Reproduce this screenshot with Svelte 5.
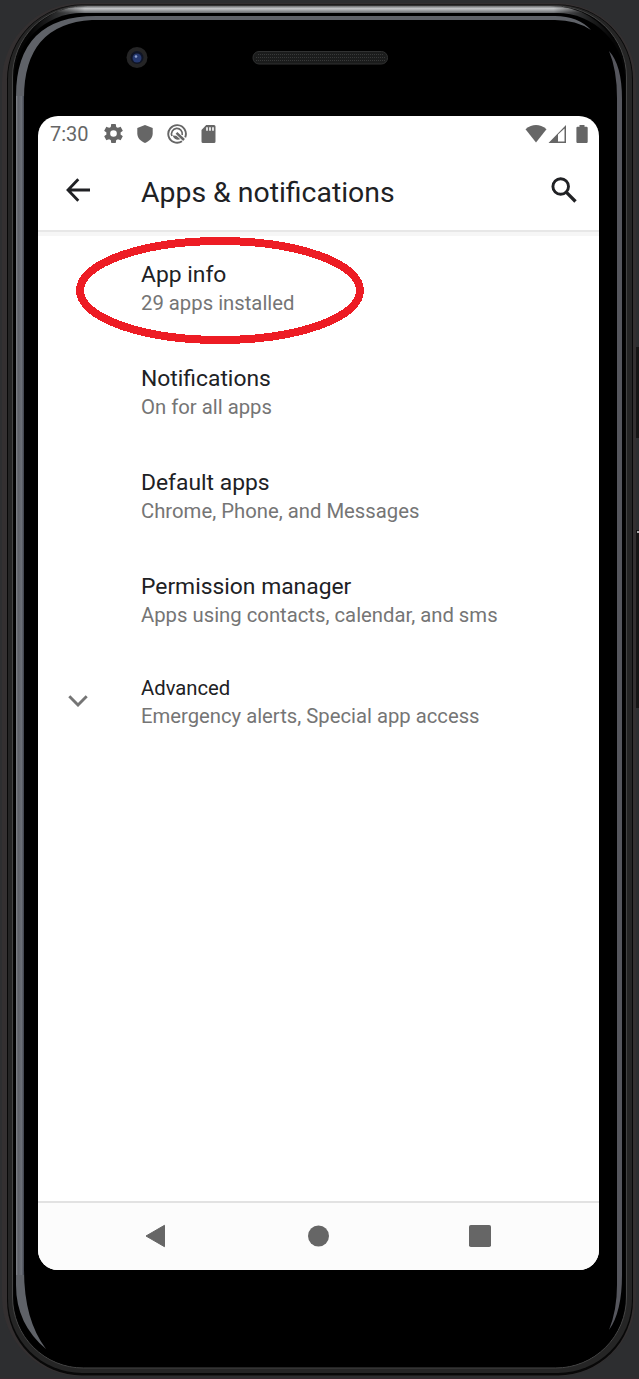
<script>
  const items = [
    { title: 'App info', summary: '29 apps installed' },
    { title: 'Notifications', summary: 'On for all apps' },
    { title: 'Default apps', summary: 'Chrome, Phone, and Messages' },
    { title: 'Permission manager', summary: 'Apps using contacts, calendar, and sms' },
    { title: 'Advanced', summary: 'Emergency alerts, Special app access', advanced: true }
  ];
</script>

<div class="stage">
  <svg class="frame" width="639" height="1379" viewBox="0 0 639 1379" aria-hidden="true">
    <defs>
      <linearGradient id="silver" x1="0" y1="5" x2="0" y2="13" gradientUnits="userSpaceOnUse">
        <stop offset="0" stop-color="#4b4c4e" />
        <stop offset=".45" stop-color="#c4c6c8" />
        <stop offset="1" stop-color="#65676a" />
      </linearGradient>
      <linearGradient id="fade" x1="30" y1="0" x2="639" y2="0" gradientUnits="userSpaceOnUse">
        <stop offset="0" stop-color="#aaa" stop-opacity="0" />
        <stop offset=".09" stop-color="#fff" />
        <stop offset=".86" stop-color="#fff" />
        <stop offset=".96" stop-color="#777" stop-opacity="0" />
      </linearGradient>
      <mask id="topfade"><rect width="639" height="90" fill="url(#fade)" /></mask>
      <linearGradient id="glare" x1="16" y1="0" x2="24" y2="0" gradientUnits="userSpaceOnUse">
        <stop offset="0" stop-color="#85888e" />
        <stop offset=".25" stop-color="#5d6067" />
        <stop offset=".7" stop-color="#6c7078" />
        <stop offset="1" stop-color="#3e424c" />
      </linearGradient>
    </defs>
    <rect width="639" height="1379" fill="#2d2e30" />
    <rect y="1378" width="639" height="1" fill="#382a30" />
    <rect x="636" y="347" width="3" height="91" fill="#161515" />
    <rect x="636" y="530" width="3" height="178" fill="#161515" />
    <rect x="637" y="531" width="2" height="2" fill="#aaa" />
    <rect x="2" y="3" width="634" height="1373" rx="79" fill="#343031" />
    <rect x="7" y="4.500" width="626" height="1371" rx="75" fill="#080808" />
    <rect x="8" y="5" width="624" height="1368" rx="74" fill="#252525" />
    <rect x="12.500" y="6" width="614" height="1362" rx="71" fill="#050505" stroke="#454545" />
    <path d="M28 41Q49 9.500 88 9.500H550Q591 9.500 615 47" fill="none" stroke="url(#silver)" stroke-width="7" mask="url(#topfade)" />
    <rect x="14" y="13" width="611" height="1354" rx="68" fill="#000" />
    <path d="M16 96Q16 16 96 16H555Q578 16 591 30Q576 20 555 20H92Q24 24 24 98V1270Q24 1320 46 1349Q16 1324 16 1285Z" fill="#5f6268" />
    <path d="M16 96H24V1275H16Z" fill="url(#glare)" />
    <path d="M609 51Q622 65 622 99V1275Q622 1312 609 1330Q617 1310 617 1285V98Q617 70 609 51Z" fill="#55565d" />
    <circle cx="137" cy="57.500" r="10.500" fill="#252526" />
    <circle cx="137" cy="57.500" r="6.500" fill="#101525" />
    <circle cx="137" cy="58" r="4.500" fill="#25386f" />
    <circle cx="136" cy="56.500" r="1.300" fill="#8da0ce" />
    <rect x="253" y="51.500" width="134.500" height="12.500" rx="6" fill="#1b1c1c" stroke="#303131" />
    <path d="M258 54.500H383M256 57.500H385M256 60.500H385" stroke="#383939" stroke-dasharray="1 1" />
  </svg>

  <main class="screen">
    <div class="status">
      <span class="time">7:30</span>
      <svg class="gear" viewBox="2 2 20 20" width="19" height="19"><path fill="#666" d="M19.430 12.980c.04-.32.07-.64.07-.98s-.03-.66-.07-.98l2.110-1.650c.19-.15.24-.42.12-.64l-2-3.460c-.12-.22-.39-.3-.61-.22l-2.490 1c-.52-.4-1.080-.73-1.690-.98l-.38-2.650A.49.49 0 0 0 14 2h-4c-.25 0-.46.18-.49.42l-.38 2.650c-.61.25-1.170.59-1.690.98l-2.490-1c-.23-.09-.49 0-.61.22l-2 3.460c-.13.22-.07.49.12.64l2.110 1.650c-.04.32-.07.65-.07.98s.03.66.07.98l-2.110 1.650c-.19.15-.24.42-.12.64l2 3.460c.12.22.39.3.61.22l2.490-1c.52.4 1.080.73 1.690.98l.38 2.650c.03.24.24.42.49.42h4c.25 0 .46-.18.49-.42l.38-2.650c.61-.25 1.170-.59 1.690-.98l2.490 1c.23.09.49 0 .61-.22l2-3.460c.12-.22.07-.49-.12-.64l-2.110-1.650zM12 15.500a3.500 3.500 0 1 1 0-7 3.500 3.500 0 0 1 0 7z" /></svg>
      <svg class="shield" viewBox="0 0 16 18" width="16" height="18"><path fill="#666" d="M8 0l7.700 3v5.500c0 4.300-3.200 7.800-7.700 9.400C3.500 16.300.3 12.800.3 8.500V3z" /></svg>
      <svg class="badge" viewBox="0 0 20 20" width="20" height="20" fill="none" stroke="#666"><path d="M15 17.200A8.800 8.800 0 1 1 18.200 13.300" stroke-width="1.900" /><path d="M5 12A5.400 5.400 0 1 1 15.200 11" stroke-width="1.700" /><path d="M9.500 8.800L17 16" stroke-width="2.500" /><path d="M5.500 11.500L9.300 11.800 13.300 15.300Q8 17 5.500 11.500z" fill="#666" stroke="none" /></svg>
      <svg class="card" viewBox="0 0 15 18" width="15" height="18"><path fill="#666" fill-rule="evenodd" d="M5.200 0H13q1.500 0 1.500 1.500v15q0 1.500-1.500 1.500H2q-1.500 0-1.500-1.500V5zM5.200 2.200v3.500h1.600V2.200zm3 0v3.500h1.600V2.200zm3 0v3.500h1.600V2.200z" /></svg>
      <span class="space"></span>
      <svg class="wifi" viewBox="0 0 22 18" width="22" height="18"><path fill="#666" d="M.5 4.200Q11-4 21.500 4.200L11 17.500z" /></svg>
      <svg class="signal" viewBox="0 0 19 18" width="19" height="18"><path fill="#666" fill-rule="evenodd" d="M.5 18L18 0v18zM10 9.500v7h6.500V3.500z" /></svg>
      <svg class="battery" viewBox="0 0 12 18" width="12" height="18"><path fill="#666" d="M3.500 0h5v1.700h2q1.200 0 1.200 1.200v13.800q0 1.300-1.200 1.300h-9Q.4 18 .4 16.700V2.900q0-1.200 1.100-1.200h2z" /></svg>
    </div>

    <header>
      <svg class="back" viewBox="0 0 24 24" width="24" height="24"><path d="M12.300 1.200L2 12l10.300 10.800M2 12h22" fill="none" stroke="#202124" stroke-width="2.800" /></svg>
      <h1>Apps &amp; notifications</h1>
      <svg class="search" viewBox="0 0 26 26" width="26" height="26" fill="none" stroke="#202124"><circle cx="9.700" cy="9.500" r="7.800" stroke-width="2.900" /><path d="M15.200 15.200L24.500 24.500" stroke-width="3.300" /></svg>
    </header>

    <section class="list">
      {#each items as item}
        <div class="item" class:advanced={item.advanced}>
          <div class="lead">
            {#if item.advanced}
              <svg viewBox="0 0 20 12" width="20" height="12"><path d="M1.300 1.300L10 10l8.700-8.700" fill="none" stroke="#757575" stroke-width="2.900" /></svg>
            {/if}
          </div>
          <div class="copy">
            <div class="title">{item.title}</div>
            <div class="summary">{item.summary}</div>
          </div>
        </div>
      {/each}
    </section>

    <nav>
      <svg width="21" height="24" viewBox="0 0 21 24"><path d="M1 12L19.500 1.300v21.400z" fill="#666" stroke="#666" stroke-linejoin="round" /></svg>
      <svg width="22" height="22" viewBox="0 0 22 22"><circle cx="11.500" cy="11" r="10.500" fill="#666" /></svg>
      <svg width="22" height="22" viewBox="0 0 22 22"><rect width="22" height="22" rx="1.800" fill="#666" /></svg>
    </nav>
  </main>

  <svg class="mark" width="288" height="107" viewBox="0 0 288 107" shape-rendering="crispEdges"><ellipse cx="144" cy="53.500" rx="140" ry="49.500" fill="none" stroke="#ed1c24" stroke-width="8" /></svg>
</div>

<style>
  :global(body) { margin: 0; background: #2d2e30; }
  .stage { position: relative; box-sizing: border-box; width: 639px; height: 1379px; padding: 116px 40px 109px 38px; overflow: hidden; font-family: Roboto, sans-serif; }
  .frame { position: absolute; inset: 0; }
  svg { display: block; flex: none; }
  .screen { position: relative; display: flex; flex-direction: column; height: 1154px; border-radius: 20px; overflow: hidden; background: #fff; }
  .status { display: flex; align-items: center; box-sizing: border-box; height: 35px; padding: 0 11px 0 12px; }
  .time { width: 54px; padding-top: 1px; font-size: 20px; line-height: 34px; color: #666; }
  .shield { margin-left: 14px; }
  .badge { margin-left: 14px; }
  .card { margin-left: 14px; }
  .space { flex: 1; }
  .signal { margin-left: 1px; }
  .battery { margin-left: 9px; }
  header { display: flex; align-items: center; box-sizing: border-box; height: 79px; padding: 0 22px 1px 28px; }
  h1 { flex: 1; margin: 5px 0 0 51px; font-size: 28.400px; line-height: 36px; font-weight: 400; color: #202124; }
  .list { flex: 1; border-top: 2px solid #e7e7e7; box-shadow: inset 0 4px #f6f6f6; }
  .item { display: flex; height: 104px; box-sizing: border-box; padding-top: 28px; }
  .lead { flex: none; width: 103px; padding: 20px 0 0 30px; box-sizing: border-box; }
  .title { height: 29px; font-size: 22.850px; line-height: 30px; color: #202124; white-space: nowrap; }
  .summary { font-size: 20.300px; line-height: 28px; color: #757575; white-space: nowrap; }
  .item.advanced { padding-top: 26px; }
  .advanced .lead { padding-top: 21px; }
  .advanced .title { height: 28px; font-size: 20.250px; line-height: 28px; }
  .advanced .summary { font-size: 20.250px; }
  nav { display: flex; align-items: center; box-sizing: border-box; height: 69px; border-top: 2px solid #e2e2e2; background: #fcfcfc; padding: 0 108px 2px 107px; justify-content: space-between; }
  .mark { position: absolute; left: 76px; top: 237px; pointer-events: none; }
</style>
